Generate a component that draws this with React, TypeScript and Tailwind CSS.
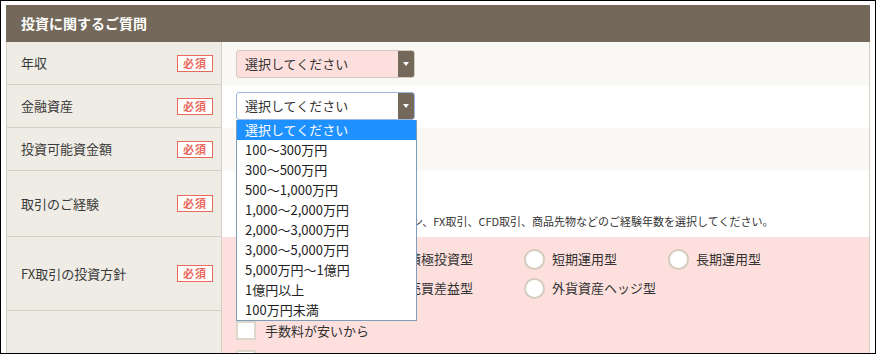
import React from "react";

const FONT = { fontFamily: '"Noto Sans CJK JP", "Noto Sans", sans-serif' };

const incomeOptions = [
  "選択してください",
  "100〜300万円",
  "300〜500万円",
  "500〜1,000万円",
  "1,000〜2,000万円",
  "2,000〜3,000万円",
  "3,000〜5,000万円",
  "5,000万円〜1億円",
  "1億円以上",
  "100万円未満",
];

function Badge() {
  return (
    <span className="flex h-[17px] w-[36px] items-center justify-center border border-[#e9695c] bg-white text-[11px] font-bold leading-none tracking-[1px] text-[#e9695c]">
      必須
    </span>
  );
}

function Select({ pink, focused, open }: { pink?: boolean; focused?: boolean; open?: boolean }) {
  return (
    <div className="relative">
      <div
        className={`flex h-[28px] w-[179px] items-center rounded-[3px] border ${
          focused ? "border-[#9ab8e4]" : "border-[#d3cbbe]"
        } ${pink ? "bg-[#fde0dd]" : "bg-white"}`}
      >
        <span className="flex-1 pl-[8px] text-[13px] text-[#333]">選択してください</span>
        <span className="flex h-full w-[16px] items-center justify-center rounded-r-[2px] bg-[#736859]">
          <span className="h-0 w-0 border-x-[3px] border-t-[4px] border-x-transparent border-t-white" />
        </span>
      </div>
      {open && (
        <ul className="absolute left-0 top-[28px] z-10 w-[181px] border border-t-0 border-[#7f9db9] bg-white">
          {incomeOptions.map((o, i) => (
            <li
              key={o}
              className={`flex h-[20px] items-center pl-[8px] text-[13px] ${
                i === 0 ? "bg-[#1e90ff] text-white" : "text-[#222]"
              }`}
            >
              {o}
            </li>
          ))}
        </ul>
      )}
    </div>
  );
}

function Radio({ label }: { label: string }) {
  return (
    <label className="flex w-[144px] items-center gap-[7px] text-[13px] text-[#333]">
      <span className="h-[21px] w-[21px] shrink-0 rounded-full border-2 border-[#d4ccbd] bg-white" />
      {label}
    </label>
  );
}

function Check({ label }: { label: string }) {
  return (
    <label className="flex h-[29px] items-center gap-[9px] text-[13px] text-[#333]">
      <span className="h-[19px] w-[20px] shrink-0 border-2 border-[#ddd6ca] bg-white" />
      {label}
    </label>
  );
}

function Row({
  label,
  height,
  bg,
  last,
  children,
}: {
  label?: string;
  height: string;
  bg: string;
  last?: boolean;
  children?: React.ReactNode;
}) {
  return (
    <div className={`flex ${height}`}>
      <div
        className={`flex w-[215px] shrink-0 items-center justify-between border-r border-[#d5d0c4] bg-[#efece6] pl-[14px] pr-[8px] ${
          last ? "" : "border-b"
        }`}
      >
        <span className="text-[13px] text-[#3a3a3a]">{label}</span>
        {label && <Badge />}
      </div>
      <div className={`flex-1 pl-[14px] ${bg}`}>{children}</div>
    </div>
  );
}

export default function App() {
  return (
    <div style={FONT} className="h-[354px] w-[876px] overflow-hidden border border-black bg-white px-[5px] pt-[4px]">
      <div className="flex h-[37px] items-center bg-[#736859] pl-[15px] text-[14px] font-bold text-white">
        投資に関するご質問
      </div>
      <div className="border-x border-[#d5d0c4]">
        <Row label="年収" height="h-[43px]" bg="flex items-center bg-[#f9f8f4]">
          <Select pink />
        </Row>
        <Row label="金融資産" height="relative z-10 h-[43px]" bg="bg-white pt-[7px]">
          <Select focused open />
        </Row>
        <Row label="投資可能資金額" height="h-[43px]" bg="flex items-center bg-[#f9f8f4]">
          <Select />
        </Row>
        <Row label="取引のご経験" height="h-[66px]" bg="bg-white pt-[8px]">
          <Select />
          <p className="mt-[6px] text-[11px] text-[#333]">
            ※株式、投資信託、先物・オプション、FX取引、CFD取引、商品先物などのご経験年数を選択してください。
          </p>
        </Row>
        <Row label="FX取引の投資方針" height="h-[74px]" bg="bg-[#fde0dd] pt-[11px]">
          <div className="flex h-[22px] items-center">
            <Radio label="安定運用型" />
            <Radio label="積極投資型" />
            <Radio label="短期運用型" />
            <Radio label="長期運用型" />
          </div>
          <div className="mt-[7px] flex h-[22px] items-center">
            <Radio label="スワップ金利型" />
            <Radio label="売買差益型" />
            <Radio label="外貨資産ヘッジ型" />
          </div>
        </Row>
        <Row height="h-[60px]" bg="bg-[#fde0dd] pt-[5px]" last>
          <Check label="手数料が安いから" />
          <Check label="取引ツールが使いやすいから" />
        </Row>
      </div>
    </div>
  );
}
